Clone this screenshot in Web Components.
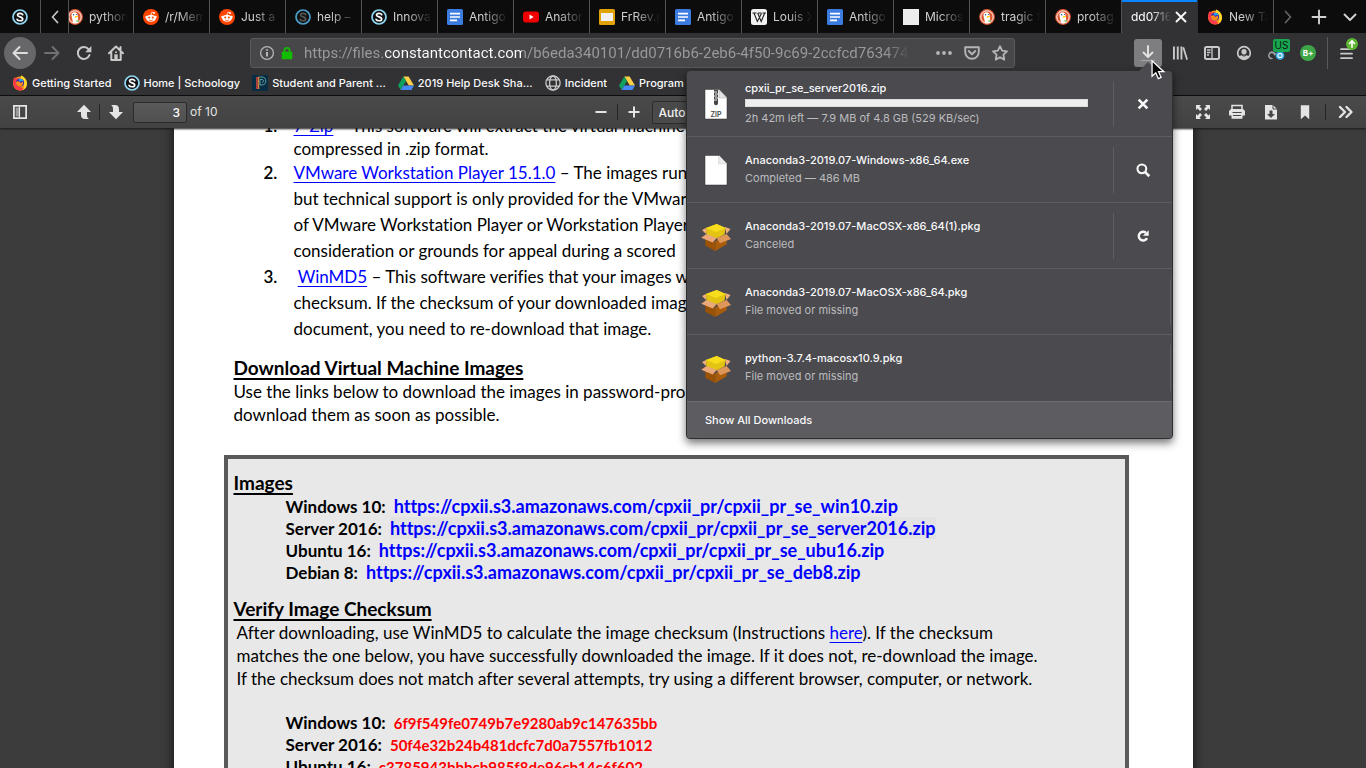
<!DOCTYPE html>
<html lang="en">
<head>
<meta charset="utf-8">
<title>cpxii download instructions</title>
<style>
  html, body { margin: 0; height: 100%; overflow: hidden; background: #3c3c3c; }
  body { font: 11px/16px Inter, "Liberation Sans", sans-serif; color: #f9f9fa; }
</style>
</head>
<body>
<browser-window>
  <tab-strip slot="tabs">
    <browser-tab slot="pinned" pinned icon="schoology" label="Schoology"></browser-tab>
    <browser-tab icon="duck">python</browser-tab>
    <browser-tab icon="reddit">/r/Mem</browser-tab>
    <browser-tab icon="reddit">Just a</browser-tab>
    <browser-tab icon="schoology-dim">help –</browser-tab>
    <browser-tab icon="schoology">Innova</browser-tab>
    <browser-tab icon="docs">Antigo</browser-tab>
    <browser-tab icon="youtube">Anator</browser-tab>
    <browser-tab icon="slides">FrRev.p</browser-tab>
    <browser-tab icon="docs">Antigo</browser-tab>
    <browser-tab icon="wiki">Louis X</browser-tab>
    <browser-tab icon="docs">Antigo</browser-tab>
    <browser-tab icon="blank">Micros</browser-tab>
    <browser-tab icon="duck">tragic f</browser-tab>
    <browser-tab icon="duck">protag</browser-tab>
    <browser-tab active>dd0716</browser-tab>
    <browser-tab icon="firefox">New Ta</browser-tab>
  </tab-strip>
  <nav-bar slot="nav">
    <downloads-panel slot="downloads">
      <download-item icon="zip" action="cancel" progress>cpxii_pr_se_server2016.zip<span slot="status">2h 42m left — 7.9 MB of 4.8 GB (529 KB/sec)</span></download-item>
      <download-item icon="file" action="search">Anaconda3-2019.07-Windows-x86_64.exe<span slot="status">Completed — 486 MB</span></download-item>
      <download-item icon="package" action="retry">Anaconda3-2019.07-MacOSX-x86_64(1).pkg<span slot="status">Canceled</span></download-item>
      <download-item icon="package">Anaconda3-2019.07-MacOSX-x86_64.pkg<span slot="status">File moved or missing</span></download-item>
      <download-item icon="package">python-3.7.4-macosx10.9.pkg<span slot="status">File moved or missing</span></download-item>
    </downloads-panel>
  </nav-bar>
  <bookmark-bar slot="bookmarks">
    <bookmark-link icon="firefox">Getting Started</bookmark-link>
    <bookmark-link icon="schoology">Home | Schoology</bookmark-link>
    <bookmark-link icon="powerschool">Student and Parent ...</bookmark-link>
    <bookmark-link icon="drive">2019 Help Desk Sha...</bookmark-link>
    <bookmark-link icon="globe">Incident</bookmark-link>
    <bookmark-link icon="drive">Program</bookmark-link>
  </bookmark-bar>
  <pdf-toolbar slot="toolbar"></pdf-toolbar>
  <pdf-page></pdf-page>
</browser-window>

<script>
const define = (name, css, html) => customElements.define(name, class extends HTMLElement {
  connectedCallback() {
    if (this.shadowRoot) return;
    const markup = typeof html === 'function' ? html(this) : html;
    this.attachShadow({ mode: 'open' }).innerHTML = `<style>
      :host, *, ::before, ::after { box-sizing: border-box; }
      button { appearance: none; border: 0; margin: 0; padding: 0; background: none; color: inherit; font: inherit; display: flex; align-items: center; justify-content: center; }
      ${css}</style>${markup}`;
  }
});

const stroke = (d, w = 2) => `<path d="${d}" fill="none" stroke="currentColor" stroke-width="${w}" stroke-linecap="round" stroke-linejoin="round"/>`;
const schoology = (ring, fill, ink) => `<circle cx="8" cy="8" r="7" fill="${fill}" stroke="${ring}" stroke-width="1.7"/><path d="M10.7 5.7C9.8 3.8 5.7 3.8 5.5 6c-.1 2.3 5.2 1.500 5.200 4 0 2.300-4.600 2.300-5.600 .3" fill="none" stroke="${ink}" stroke-width="1.700" stroke-linecap="round"/>`;
const firefox = `<circle cx="8" cy="8.500" r="6.900" fill="#ff9611"/><path d="M1.200 6C1.500 4 2.300 2.500 3.300 1.800c0 1 .3 1.500.9 2C6 3 7 3 8 3.200L5 10l6 3.500 3.500-1.500C13 14.500 10.800 15.600 8 15.500 3.800 15.500.4 11.500 1.200 6z" fill="#ff3b47"/><path d="M9 .6c3.500 1.400 6.300 4.400 6 8.700-.3 3.400-2.600 5.400-4.700 6 2-2.300 2.500-5 1.200-7.500C10.700 5.500 8.300 4 9 .6z" fill="#ffd92e"/><circle cx="8" cy="7.800" r="4.100" fill="#3a2fb0"/><path d="M4 7c2-1.600 3-.4 4 .4 1.200.6 2.200-.1 3-.9.4 4-1.500 5.400-3.500 5.300C5 11.700 3.700 9.500 4 7z" fill="#ff8a16"/><path d="M6.500 4.200c2-1 4.500.2 5.100 2.300-1.500-.8-2.500-.5-3.800.3z" fill="#2aa4f4"/>`;

const ICONS = {
  schoology: schoology('#8fd8f4', '#111', '#fff'),
  'schoology-dim': schoology('#4b9fc9', '#111', '#555'),
  firefox,
  duck: '<circle cx="8" cy="8" r="7.900" fill="#de5833"/><circle cx="8" cy="8" r="6.200" fill="none" stroke="#fff" stroke-width="1"/><path d="M5 4.200c1.800-2 5.600-.8 5.700 2.200l.7 7.100c-1.500.8-4 .8-5.500 0L4.700 7.500C4.300 6 4.300 5 5 4.200z" fill="#fff"/><path d="M7.800 7.400c1.500-.6 3-.4 3.800.1-.8.8-2.400.8-3.600 1.400z" fill="#fdd20a"/><path d="M8 12.100l3.600-1.100v2z" fill="#65bc46"/><circle cx="6.600" cy="5.800" r=".8" fill="#2d4f8e"/><circle cx="9.600" cy="5.500" r=".6" fill="#2d4f8e"/>',
  reddit: '<circle cx="8" cy="8" r="8" fill="#ff4500"/><circle cx="3.600" cy="8" r="1.300" fill="#fff"/><circle cx="12.400" cy="8" r="1.300" fill="#fff"/><ellipse cx="8" cy="9.200" rx="4.900" ry="3.500" fill="#fff"/><circle cx="11" cy="3.900" r="1" fill="#fff"/><path d="M8 6l.7-2.700 2.200.5" stroke="#fff" stroke-width=".7" fill="none"/><circle cx="6.200" cy="8.600" r="1" fill="#ff4500"/><circle cx="9.800" cy="8.600" r="1" fill="#ff4500"/><path d="M6 10.900c1 .9 3 .9 4 0" stroke="#ff4500" stroke-width=".7" fill="none"/>',
  docs: '<rect width="16" height="16" rx="1.500" fill="#3c7be0"/><path d="M3 3.800h10v1.600H3zM3 7.200h10v1.600H3zM3 10.600h7v1.600H3z" fill="#fff"/>',
  slides: '<rect width="16" height="16" rx="1.500" fill="#dfa207"/><rect x="2" y="4" width="12" height="8" fill="#f1f1f1"/>',
  youtube: '<rect y="2.500" width="16" height="11" rx="3" fill="#f00000"/><path d="M6.500 5.600v4.800L10.700 8z" fill="#fff"/>',
  wiki: '<rect width="16" height="16" rx="2.500" fill="#f1f1f1"/><path d="M1.500 4h4M7 4h3.500M11.500 4H15M3 4l3.300 8.500L10.500 4.500M6.700 4l3.500 8.500L13.700 4" fill="none" stroke="#222" stroke-width="1.100"/>',
  blank: '<rect width="16" height="16" fill="#ececec"/>',
  powerschool: '<rect width="16" height="16" fill="#0a2d46"/><path d="M5 2v12" stroke="#e0443e" stroke-width="1.500"/><path d="M6.700 14V2h1" stroke="#f0a23c" fill="none"/><path d="M8 2h2c5 0 5 8 0 8H8V4.500h2c2 0 2 3 0 3" stroke="#6fb9a9" fill="none" stroke-width=".8"/>',
  drive: '<path d="M5.400 1.500h5.200L16 10.500h-5.200z" fill="#ffcf48"/><path d="M5.400 1.500L8 6 2.700 15 0 10.500z" fill="#10a15c"/><path d="M5.300 10.500H16L13.400 15H2.700z" fill="#4688f4"/>',
  globe: '<g fill="none" stroke="#c9c9ca" stroke-width="1.300"><circle cx="8" cy="8" r="7.100"/><ellipse cx="8" cy="8" rx="3.400" ry="7"/><path d="M2 4.800h12M2 11.200h12"/></g>',
  left: stroke('M10.500 2.500L5.500 8l5 5.500', 1.700),
  right: stroke('M5.500 2.500l5 5.500-5 5.500', 1.700),
  down: stroke('M2.500 5.500L8 11l5.500-5.500', 1.900),
  plus: stroke('M8 1.500v13M1.500 8h13', 1.900),
  close: stroke('M3.500 3.500l9 9m0-9l-9 9', 1.900),
  back: stroke('M15 8H1.500m6-6l-6 6 6 6'),
  forward: stroke('M1 8h13.500m-6-6l6 6-6 6'),
  reload: stroke('M12.600 4.300A6 6 0 1 0 13.500 10') + '<path d="M15.400 1v6.200H9.200z" fill="currentColor"/>',
  home: stroke('M1 8.300L8 1.500l7 6.800M3.300 7.500V15h9.400V7.500M12.500 2v3') + '<path d="M6.300 9.300h3.400V15H6.300z" fill="currentColor"/><circle cx="8" cy="7.200" r="1" fill="currentColor"/>',
  info: '<circle cx="8" cy="8" r="6.400" fill="none" stroke="currentColor" stroke-width="1.300"/><path d="M7 7h2v4.500H7zM7 4.200h2v1.600H7z" fill="currentColor"/>',
  lock: '<rect x="2" y="6.500" width="12" height="8.500" rx="1" fill="#12bc00"/><path d="M5 7V5a3 3 0 0 1 6 0v2" fill="none" stroke="#12bc00" stroke-width="2"/>',
  dots: '<g fill="currentColor"><circle cx="2" cy="8" r="1.900"/><circle cx="8" cy="8" r="1.900"/><circle cx="14" cy="8" r="1.900"/></g>',
  pocket: stroke('M1.200 2.200h13.600V7a6.800 6.800 0 0 1-13.600 0zM4.700 6L8 9.200 11.300 6', 1.900),
  star: stroke('M8 1.200l2.100 4.500 4.900.6-3.600 3.400.9 4.900L8 12.200l-4.300 2.400.9-4.900L1 6.300l4.900-.6z', 1.800),
  library: '<path d="M1 1.500h1.900v13H1zM4.800 1.500h1.900v13H4.800zM8.500 1.500h1.900v13H8.500z" fill="currentColor"/>' + stroke('M11.500 3l3.400 11', 1.800),
  sidebar: '<rect x="1" y="2" width="14" height="12" rx="1.500" fill="none" stroke="currentColor" stroke-width="2"/><path d="M8 2.500v11M3 5h3.500M3 7.500h3.500M3 10h2" stroke="currentColor" stroke-width="1.300"/>',
  account: '<circle cx="8" cy="8" r="6.300" fill="none" stroke="currentColor" stroke-width="1.700"/><circle cx="8" cy="6.700" r="2.600" fill="currentColor"/><path d="M3 11.500c3-2.500 7-2.500 10 0-2.500 4-7.500 4-10 0z" fill="currentColor"/><path d="M5.800 10.200c1.500 1 3 1 4.400 0" stroke="#323234" fill="none"/>',
  proxy: '<g fill="none" stroke="#9ba3a8" stroke-width="1.500"><path d="M4.500 13.500a3 3 0 1 1 2.300-3.200M1.500 8.500C3 6 6 7 8 9.500"/></g><circle cx="12" cy="10.500" r="3.500" fill="#fff" stroke="#35a8e0" stroke-width="1.800"/><circle cx="12" cy="10.500" r="1.500" fill="#35a8e0"/>',
  menu: stroke('M2 4.200h11M2 8.700h11M2 13.200h11', 1.800),
  upcircle: '<circle cx="8" cy="8" r="8" fill="#5cb52f"/><path d="M8 13V4M4 8l4-4 4 4" fill="none" stroke="#fff" stroke-width="2.200"/>',
  download: stroke('M8 1v11M3.500 7.500L8 12l4.500-4.500', 1.900) + '<path d="M1 15.500h14" stroke="#a5a5a7"/>',
  pane: '<path d="M1 1h14v14H1z" fill="none" stroke="currentColor" stroke-width="2"/><path d="M3 3h3.500v10H3z" fill="#9a9a9a"/><path d="M7.300 2v12" stroke="currentColor" stroke-width="1.500"/>',
  pageup: '<path d="M8 .8l7 7.200h-4v3c0 2 .5 3 2 4H9c-2.500 0-4-1.500-4-4V8H1z" fill="currentColor"/>',
  pagedown: '<path d="M8 15.200L1 8h4V5c0-2-.5-3-2-4h4c2.500 0 4 1.500 4 4v3h4z" fill="currentColor"/>',
  minus: '<path d="M2.500 7h11v2h-11z" fill="currentColor"/>',
  add: '<path d="M2.500 7h11v2h-11zM7 2.500h2v11H7z" fill="currentColor"/>',
  fullscreen: '<path d="M1 1h5L4.500 2.500 7 5 5 7 2.500 4.500 1 6zM15 1v5l-1.500-1.500L11 7 9 5l2.500-2.500L10 1zM1 15v-5l1.500 1.500L5 9l2 2-2.500 2.500L6 15zM15 15h-5l1.500-1.500L9 11l2-2 2.500 2.500L15 10z" fill="currentColor"/>',
  print: '<path d="M3 5V1.500h10V5" fill="none" stroke="currentColor" stroke-width="1.500"/><path d="M2 5h12l2 2v4.500h-2.500v3.300h-11v-3.300H0V7z" fill="currentColor"/><path d="M3.500 8.500h9M4 11.500h8" stroke="#474747" stroke-width="1.100"/>',
  save: '<path d="M2 1h8l4 4v10.500H2z" fill="currentColor"/><path d="M10 1v4h4" stroke="#474747" fill="none"/><path d="M6.500 6.500h3V10H12l-4 4-4-4h2.500z" fill="#474747"/>',
  ribbon: '<path d="M3.800 1.200h8.400v14L8 11.500l-4.200 3.700z" fill="currentColor"/>',
  chevrons: stroke('M2 3l5 5-5 5M8.500 3l5 5-5 5', 2.400),
  cancel: '<path d="M3 3l10 10m0-10l-10 10" stroke="currentColor" stroke-width="3"/>',
  search: '<circle cx="6.700" cy="6.700" r="5" fill="none" stroke="currentColor" stroke-width="2.400"/><path d="M10.200 10.200l5 5" stroke="currentColor" stroke-width="3"/>',
  retry: '<path d="M12.600 10.500A5 5 0 1 1 11.300 4.300" fill="none" stroke="currentColor" stroke-width="2.800"/><path d="M14.500 1.500v6.300H7.800z" fill="currentColor"/>',
  file: '<path d="M5 1.500h14.500l7.500 8V31H5z" fill="#fff" stroke="#333" stroke-width=".5"/><path d="M18.500 2l8 8h-8z" fill="#ececec" stroke="#ccc" stroke-width=".5"/>',
  zip: '<path d="M5 1.500h14.500l7.500 8V31H5z" fill="#fff" stroke="#333" stroke-width=".5"/><path d="M19 2l7.500 8H19z" fill="#e3e3e3" stroke="#aaa" stroke-width=".5"/><path d="M14 2h4v13c0 3-4 3-4 0z" fill="#444"/><path d="M14 4h3M15 6h3M14 8h3M15 10h3M14 12h3" stroke="#fff" stroke-width=".9"/><text x="16" y="28.500" font-size="7" font-weight="600" text-anchor="middle" fill="#444" font-family="Inter, sans-serif">ZIP</text>',
  package: '<path d="M5.300 18l10 4V31l-10-5.300z" fill="#9a5206"/><path d="M15.300 21l11.400-4v7.300L15.300 31z" fill="#a95c0c"/><path d="M25 7l5.500 2-4 5zM7 7.500L2 10l4 4z" fill="#efb07e"/><path d="M6 8l10.700-4 9 4-1.200 6.500-7.800 3.800L6.500 15z" fill="#e3c413"/><path d="M6 8l10.700-4 9 4-9.500 4z" fill="#f8dd1c"/><path d="M6.500 14l10.200 4-4 4.500-11.500-4.800z" fill="#eba878"/><path d="M16.700 18l9.800-4 4.500 5-11 4.300z" fill="#df9659"/>',
  pointer: '<path d="M1 .800v14.500l3.500-3.300 2.400 5.500 2.600-1.200-2.400-5.300h5z" fill="#050505" stroke="#fff" stroke-width="1.200"/>'
};

/* Square glyph: the name picks the drawing; file kinds use a 32-unit grid. */
define('ui-icon', `
  :host { display: inline-flex; flex: none; width: var(--icon-size, 16px); height: var(--icon-size, 16px); }
  svg { width: 100%; height: 100%; display: block; overflow: visible; }
`, el => {
  const box = ['file', 'zip', 'package'].includes(el.getAttribute('name')) ? 32 : 16;
  return `<svg viewBox="0 0 ${box} ${box}" aria-hidden="true">${ICONS[el.getAttribute('name')]}</svg>`;
});

define('browser-window', `
  :host { display: flex; flex-direction: column; height: 100vh; }
  header { position: relative; z-index: 1; background: #323234; }
  main { flex: 1; min-height: 0; overflow: hidden; background: #3c3c3c; }
`, `<header><slot name="tabs"></slot><slot name="nav"></slot><slot name="bookmarks"></slot></header>
  <slot name="toolbar"></slot><main><slot></slot></main>`);

define('tab-strip', `
  :host { display: flex; height: 33px; background: #0c0c0d; }
  .scroll { width: 28px; border-right: 1px solid #525253; color: #c8c8c9; }
  .tabs { flex: 1; min-width: 0; display: flex; justify-content: flex-end; overflow: hidden; }
  .tools { display: flex; width: 92px; justify-content: space-between; padding: 0 8px 0 6px; color: #d2d2d3; }
  .dim { color: #646465; }
`, `<slot name="pinned"></slot>
  <button class="scroll" aria-label="Scroll left"><ui-icon name="left"></ui-icon></button>
  <div class="tabs" role="tablist"><slot></slot></div>
  <div class="tools">
    <button class="dim" aria-label="Scroll right"><ui-icon name="right"></ui-icon></button>
    <button aria-label="New tab"><ui-icon name="plus"></ui-icon></button>
    <button aria-label="List all tabs"><ui-icon name="down"></ui-icon></button>
  </div>`);

define('browser-tab', `
  :host { display: block; flex: 0 0 76px; min-width: 0; border-right: 1px solid #525253; }
  :host([pinned]) { flex-basis: 41px; }
  :host([active]) { background: #323234; border-right-color: #323234; }
  button { width: 100%; height: 33px; padding: 0 5px 0 9px; gap: 6px; font-size: 12px; }
  :host([pinned]) button { padding: 0; }
  :host([active]) button { border-top: 2px solid #0a84ff; padding-right: 8px; padding-bottom: 2px; gap: 2px; }
  .label { flex: 1; min-width: 0; overflow: hidden; white-space: nowrap; text-align: left; color: #d0d0d1;
    mask-image: linear-gradient(to right, #000 35%, transparent); }
  :host([active]) .label { color: #fff; mask-image: linear-gradient(to right, #000 50%, transparent); }
`, el => `<button role="tab" aria-selected="${el.hasAttribute('active')}" ${el.hasAttribute('pinned') ? 'aria-label="Schoology"' : ''}>
  ${el.hasAttribute('icon') ? `<ui-icon name="${el.getAttribute('icon')}"></ui-icon>` : ''}
  ${el.hasAttribute('pinned') ? '' : '<span class="label"><slot></slot></span>'}
  ${el.hasAttribute('active') ? '<ui-icon name="close"></ui-icon>' : ''}</button>`);

define('nav-bar', `
  :host { display: flex; align-items: center; height: 40px; padding: 0 8px 0 4px; color: #c9c9ca; }
  .nav { display: flex; width: 246px; }
  .nav button { width: 32px; height: 32px; border-radius: 50%; }
  .nav .back { background: #676769; color: #ddd; }
  .nav .forward { color: #717173; }
  .url { flex: 1; min-width: 0; display: flex; align-items: center; height: 30px; padding: 0 6px 0 8px; gap: 4px;
    border: 1px solid #5a5a5c; border-radius: 3px; background: #474749; color: #b5b5b6; }
  .url button { width: 16px; height: 16px; }
  .lock { --icon-size: 14px; }
  input { flex: 1; min-width: 0; border: 0; outline: 0; margin: 0 20px 0 5px; padding: 0; height: 24px; font: 15px/24px Roboto, Inter, sans-serif;
    color: #a3a3a5; -webkit-text-fill-color: transparent;
    background: linear-gradient(to right, #9b9b9d 80px, #fff 80px 218px, #9b9b9d 218px 580px, #474749 606px);
    -webkit-background-clip: text; background-clip: text; }
  .page { display: flex; gap: 12px; }
  .tools { display: flex; align-items: center; width: 343px; padding-left: 117px; }
  .tools > button { flex: none; width: 32px; height: 28px; position: relative; }
  .anchor { position: relative; flex: none; }
  .anchor > button { width: 28px; height: 28px; margin: 0 2px; border-radius: 3px; background: #7e7e80; color: #e3e3e3; }
  .pointer { position: absolute; left: 19px; top: 21px; z-index: 2; --icon-size: 17px; }
  .badge { position: absolute; left: 13px; top: 0; width: 17px; height: 13px; border-radius: 2px; background: #18a651; color: #0a1a0f; font-size: 10px; line-height: 13px; }
  .grade { width: 16px; height: 16px; border-radius: 50%; background: #3fa648; color: #fff; font-size: 8px; font-weight: 700; line-height: 16px; }
  .tools > .menu { flex: 1; height: 32px; margin-left: 3px; padding-left: 8px; border-left: 1px solid #59595b; }
  .update { position: absolute; right: 0; top: 1px; --icon-size: 12px; }
`, `<div class="nav">
    <button class="back" aria-label="Back"><ui-icon name="back"></ui-icon></button>
    <button class="forward" aria-label="Forward"><ui-icon name="forward"></ui-icon></button>
    <button aria-label="Reload"><ui-icon name="reload"></ui-icon></button>
    <button aria-label="Home"><ui-icon name="home"></ui-icon></button>
  </div>
  <div class="url">
    <button aria-label="Site information"><ui-icon name="info"></ui-icon></button>
    <button aria-label="Secure connection" class="lock"><ui-icon name="lock"></ui-icon></button>
    <input aria-label="Address" value="https://files.constantcontact.com/b6eda340101/dd0716b6-2eb6-4f50-9c69-2ccfcd763474.p">
    <div class="page">
      <button aria-label="Page actions"><ui-icon name="dots"></ui-icon></button>
      <button aria-label="Save to Pocket"><ui-icon name="pocket"></ui-icon></button>
      <button aria-label="Bookmark this page"><ui-icon name="star"></ui-icon></button>
    </div>
  </div>
  <div class="tools">
    <div class="anchor"><button aria-label="Downloads"><ui-icon name="download"></ui-icon></button><slot name="downloads"></slot><ui-icon class="pointer" name="pointer"></ui-icon></div>
    <button aria-label="Library"><ui-icon name="library"></ui-icon></button>
    <button aria-label="Sidebars"><ui-icon name="sidebar"></ui-icon></button>
    <button aria-label="Account"><ui-icon name="account"></ui-icon></button>
    <button aria-label="Proxy"><ui-icon name="proxy"></ui-icon><span class="badge">US</span></button>
    <button aria-label="Grade"><span class="grade">B+</span></button>
    <button class="menu" aria-label="Menu"><ui-icon name="menu"></ui-icon><ui-icon class="update" name="upcircle"></ui-icon></button>
  </div>`);

define('downloads-panel', `
  :host { position: absolute; top: 31px; right: -9px; width: 487px; border: 1px solid #2e2e31; border-radius: 4px;
    background: #4a4a4f; color: #f9f9fa; box-shadow: 0 4px 9px rgba(0, 0, 0, .55); }
  :host::before { content: ""; position: absolute; right: 15px; top: -9px; border: 9px solid transparent; border-top: 0; border-bottom-color: #4a4a4f; }
  button { width: 100%; height: 37px; padding-left: 18px; justify-content: flex-start; background: #5c5c61; border-top: 1px solid #6b6b70; border-radius: 0 0 3px 3px; font-weight: 500; }
`, `<slot></slot><button>Show All Downloads</button>`);

define('download-item', `
  :host { display: flex; align-items: center; height: 66px; border-bottom: 1px solid #5c5c61; }
  :host(:last-of-type) { border-bottom: 0; }
  ui-icon.kind { --icon-size: 32px; margin: 0 13px; }
  .text { flex: 1; min-width: 0; padding-bottom: 2px; }
  .name { font-weight: 500; line-height: 18px; }
  .status { color: #bcbcbe; line-height: 18px; }
  progress { display: block; appearance: none; width: calc(100% - 25px); height: 8px; margin: 2px 0; border: 1px solid #dcdcdc; background: #efeff0; }
  progress::-webkit-progress-bar { background: #efeff0; }
  progress::-webkit-progress-value { background: #efeff0; }
  .action { width: 59px; height: 46px; border-left: 1px solid #5e5e63; }
  .action.none { width: 2px; }
  .action ui-icon { --icon-size: 14px; }
`, el => `<ui-icon class="kind" name="${el.getAttribute('icon')}"></ui-icon>
  <div class="text"><div class="name"><slot></slot></div>
  ${el.hasAttribute('progress') ? '<progress max="4800" value="8" aria-label="Download progress"></progress>' : ''}
  <div class="status"><slot name="status"></slot></div></div>
  ${el.hasAttribute('action') ? `<button class="action" aria-label="${el.getAttribute('action')}"><ui-icon name="${el.getAttribute('action')}"></ui-icon></button>` : '<div class="action none"></div>'}`);

define('bookmark-bar', `
  :host { display: flex; height: 23px; padding: 0 12px 2px; gap: 12px; align-items: center; border-bottom: 1px solid #0c0c0d; }
`, `<slot></slot>`);

define('bookmark-link', `
  :host { display: block; flex: none; }
  a { display: flex; align-items: center; gap: 4px; color: #f9f9fa; text-decoration: none; font-weight: 500; }
`, el => `<a href="#"><ui-icon name="${el.getAttribute('icon')}"></ui-icon><span><slot></slot></span></a>`);

define('pdf-toolbar', `
  :host { display: grid; grid-template-columns: 1fr auto 1fr; align-items: center; height: 32px; flex: none; padding: 0 4px;
    background: linear-gradient(#4a4a4a, #424242); box-shadow: 0 1px 2px #1a1a1a; position: relative; color: #e4e4e4; font-size: 12px; }
  div { display: flex; align-items: center; }
  button { width: 32px; height: 32px; }
  .pages { margin-left: 32px; }
  .pages button { width: 31px; }
  i { width: 1px; height: 16px; background: #252525; }
  input { width: 54px; height: 21px; margin: 0 3px 0 2px; padding: 0 6px; border: 1px solid #2b2b2b; border-radius: 2px; background: linear-gradient(#5a5a5a, #505050); color: #fff; font: 500 12px Inter, sans-serif; text-align: right; }
  select { appearance: none; width: 130px; height: 23px; margin-left: 2px; padding: 0 6px; border: 1px solid #2b2b2b; border-radius: 2px; background: #4a4a4a; color: #f2f2f2; font: 500 12px Inter, sans-serif; }
  .end { justify-content: flex-end; }
  .end button { width: 34px; }
  .end i { margin-left: 3px; }
  .end button:last-child { margin-left: 4px; width: 32px; }
`, `<div><button aria-label="Toggle sidebar"><ui-icon name="pane" style="--icon-size:14px"></ui-icon></button>
    <div class="pages"><button aria-label="Previous page"><ui-icon name="pageup"></ui-icon></button><i></i><button aria-label="Next page"><ui-icon name="pagedown"></ui-icon></button></div>
    <input id="page" value="3" aria-label="Page"><label for="page">of 10</label></div>
  <div><button aria-label="Zoom out"><ui-icon name="minus"></ui-icon></button><i></i><button aria-label="Zoom in"><ui-icon name="add"></ui-icon></button>
    <select aria-label="Zoom"><option>Automatic Zoom</option></select></div>
  <div class="end"><button aria-label="Presentation mode"><ui-icon name="fullscreen"></ui-icon></button><button aria-label="Print"><ui-icon name="print"></ui-icon></button><button aria-label="Download"><ui-icon name="save"></ui-icon></button><button aria-label="Current view"><ui-icon name="ribbon"></ui-icon></button><i></i><button aria-label="Tools"><ui-icon name="chevrons"></ui-icon></button></div>`);

define('pdf-page', `
  :host { display: block; max-width: 1019px; min-height: 100%; margin: 0 auto; padding: 0 64px 0 50px; background: #fff; color: #000;
    box-shadow: 0 0 9px 2px #1c1c1c; font: 17px/23px Lato, "Open Sans", sans-serif; font-variant-ligatures: none; white-space: nowrap; }
  a { color: #00f; text-underline-offset: 3px; text-decoration-thickness: 1px; }
  ol, ul, p, h2 { margin: 0; padding: 0; list-style: none; }
  ol { margin: -14px 0 0 40px; line-height: 26px; }
  ol li { display: flex; }
  ol li:first-child { line-height: 23px; }
  ol b { width: 30px; font-weight: 600; }
  h2 { font-size: 19px; line-height: 24px; text-decoration: underline; text-underline-offset: 3px; text-decoration-thickness: 2px; }
  .intro { margin: 14px 0 29px 10px; }
  section { height: 400px; padding: 12px 6px; border: 4px solid #5a5a5a; background: #e8e8e8; }
  ul { padding-left: 52px; font-weight: 700; line-height: 22px; }
  ul li { display: flex; align-items: baseline; height: 22px; }
  ul a { text-decoration: none; margin-left: 8px; font-size: 18px; }
  ul span { color: #f00; margin-left: 8px; font-size: 15px; }
  .hover { background: #e2e2e2; }
  .verify { margin: 14px 0 22px; }
  .verify p { padding-left: 3px; }
`, `<ol>
    <li><b>1.</b><p><a href="#">7-Zip</a> – This software will extract the virtual machine<br>compressed in .zip format.</p></li>
    <li><b>2.</b><p><a href="#">VMware Workstation Player 15.1.0</a> – The images run<br>but technical support is only provided for the VMware<br>of VMware Workstation Player or Workstation Player<br>consideration or grounds for appeal during a scored</p></li>
    <li><b>3.</b><p>&nbsp;<a href="#">WinMD5</a> – This software verifies that your images w<br>checksum. If the checksum of your downloaded imag<br>document, you need to re-download that image.</p></li>
  </ol>
  <div class="intro"><h2>Download Virtual Machine Images</h2>
    <p>Use the links below to download the images in password-pro<br>download them as soon as possible.</p></div>
  <section>
    <h2>Images</h2>
    <ul>
      <li>Windows 10:<a href="#">https://cpxii.s3.amazonaws.com/cpxii_pr/cpxii_pr_se_win10.zip</a></li>
      <li>Server 2016:<a href="#" class="hover">https://cpxii.s3.amazonaws.com/cpxii_pr/cpxii_pr_se_server2016.zip</a></li>
      <li>Ubuntu 16:<a href="#">https://cpxii.s3.amazonaws.com/cpxii_pr/cpxii_pr_se_ubu16.zip</a></li>
      <li>Debian 8:<a href="#">https://cpxii.s3.amazonaws.com/cpxii_pr/cpxii_pr_se_deb8.zip</a></li>
    </ul>
    <div class="verify"><h2>Verify Image Checksum</h2>
      <p>After downloading, use WinMD5 to calculate the image checksum (Instructions <a href="#">here</a>). If the checksum<br>matches the one below, you have successfully downloaded the image. If it does not, re-download the image.<br>If the checksum does not match after several attempts, try using a different browser, computer, or network.</p></div>
    <ul>
      <li>Windows 10:<span>6f9f549fe0749b7e9280ab9c147635bb</span></li>
      <li>Server 2016:<span>50f4e32b24b481dcfc7d0a7557fb1012</span></li>
      <li>Ubuntu 16:<span>c3785943bbbcb985f8de96cb14c6f602</span></li>
    </ul>
  </section>`);
</script>
</body>
</html>
